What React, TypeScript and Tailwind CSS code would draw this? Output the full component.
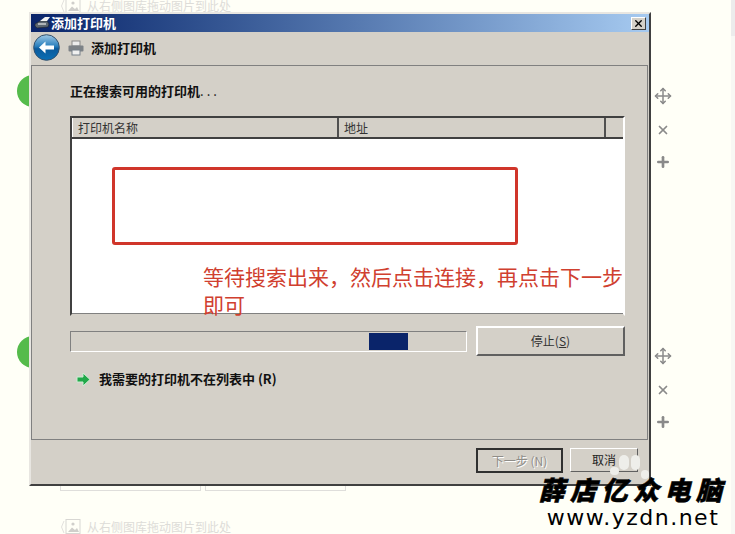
import { Move, X, Plus } from 'lucide-react';

const cjk = 'font-["Noto_Sans_CJK_SC",sans-serif]';

function DropHint({ className }: { className: string }) {
  return (
    <div className={`absolute flex items-center gap-[5px] text-[12px] leading-[12px] text-[#dddcd8] ${cjk} ${className}`}>
      <svg width="22" height="18" viewBox="0 0 22 18" fill="none">
        <path d="M4 3 L1.5 9 L4 15" stroke="#e2e1dd" />
        <rect x="6" y="1.5" width="14" height="14" stroke="#d8d7d3" />
        <circle cx="13" cy="6" r="1.6" fill="#d0cfcb" />
        <path d="M8 14 L12 9.5 L15 12 L17 10 L19 14 Z" fill="#d0cfcb" />
      </svg>
      <span>从右侧图库拖动图片到此处</span>
    </div>
  );
}

function SideTools({ className }: { className: string }) {
  return (
    <div className={`absolute flex flex-col items-center text-[#8a8a8a] ${className}`}>
      <Move size={18} strokeWidth={2} />
      <X size={14} strokeWidth={3} className="mt-[18px]" />
      <Plus size={16} strokeWidth={4} className="mt-[17px]" />
    </div>
  );
}

function BackButton() {
  return (
    <svg width="27" height="27" viewBox="0 0 27 27">
      <defs>
        <linearGradient id="back" x1="0" y1="0" x2="0" y2="1">
          <stop offset="0" stopColor="#9fc9e6" />
          <stop offset="0.45" stopColor="#2a7fbd" />
          <stop offset="0.55" stopColor="#0b5a9c" />
          <stop offset="1" stopColor="#0a6fb5" />
        </linearGradient>
      </defs>
      <circle cx="13.5" cy="13.5" r="12.8" fill="url(#back)" stroke="#33506c" />
      <path d="M6 13.5 L12.5 7.5 V11.5 H21 V15.5 H12.5 V19.5 Z" fill="#ffffff" />
    </svg>
  );
}

function PrinterIcon() {
  return (
    <svg width="16" height="16" viewBox="0 0 16 16">
      <rect x="4" y="1" width="8" height="5" fill="#ececec" stroke="#8a8a8a" />
      <rect x="0.5" y="5.5" width="15" height="6" rx="1" fill="#7d8287" />
      <rect x="4" y="10" width="8" height="5" fill="#f0f0f0" stroke="#77808a" />
    </svg>
  );
}

function TitleIcon() {
  return (
    <svg width="17" height="13" viewBox="0 0 17 13">
      <path d="M1 8 L6 5 L13 5 L15 8 L14 11 L3 12 L1 10 Z" fill="#5c6670" stroke="#20242a" strokeWidth="0.6" />
      <path d="M6 5 L11 1 L16 1 L13 5 Z" fill="#f2f2f2" />
      <path d="M4 8 H12" stroke="#e8e8e8" strokeWidth="1.2" />
    </svg>
  );
}

export default function App() {
  return (
    <div className="relative w-[735px] h-[534px] overflow-hidden bg-[#fffff7]">
      <div className="absolute left-[731px] top-0 w-[4px] h-[36px] bg-[#ececec]" />
      <div className="absolute left-[731px] top-[36px] w-[4px] h-[498px] bg-[#f8f8f4]" />

      <DropHint className="left-[60px] top-[-3px]" />
      <DropHint className="left-[60px] top-[518px]" />
      <div className="absolute left-[17px] top-[75px] w-[32px] h-[32px] rounded-full bg-[#55bb4b]" />
      <div className="absolute left-[17px] top-[336px] w-[32px] h-[32px] rounded-full bg-[#55bb4b]" />
      <div className="absolute left-[60px] top-[480px] w-[141px] h-[11px] border border-[#dfdedb]" />
      <div className="absolute left-[205px] top-[480px] w-[141px] h-[11px] border border-[#dfdedb]" />
      <SideTools className="left-[654px] top-[87px]" />
      <SideTools className="left-[654px] top-[347px]" />

      {/* dialog */}
      <div className={`absolute left-[29px] top-[12px] w-[622px] h-[474px] flex flex-col bg-[#d4d0c8] border-2 border-t-[#e8e6e1] border-l-[#e8e6e1] border-r-[#404040] border-b-[#404040] ${cjk}`}>
        <div className="h-[18px] flex items-center justify-between pl-[3px] pr-[3px] bg-gradient-to-r from-[#0a246a] to-[#a6caf0]">
          <div className="flex items-center pb-[2px] text-[13px] font-bold text-white leading-none">
            <TitleIcon />
            添加打印机
          </div>
          <div className="w-[15px] h-[13px] flex items-center justify-center bg-[#d4d0c8] border border-t-white border-l-white border-r-[#404040] border-b-[#404040]">
            <X size={11} strokeWidth={3} className="text-black" />
          </div>
        </div>

        <div className="h-[33px] flex items-start pt-[2px] pl-[2px]">
          <BackButton />
          <div className="ml-[8px] mt-[6px]">
            <PrinterIcon />
          </div>
          <span className="ml-[7px] mt-[4px] text-[13px] font-bold text-[#111]">添加打印机</span>
        </div>

        <div className="h-[375px] mr-[1px] flex flex-col border border-[#808080] pl-[37px] pr-[22px]">
          <div className="mt-[15px] ml-[1px] h-[18px] flex items-center text-[13px] font-bold text-[#111] leading-none">
            正在搜索可用的打印机<span className="tracking-[3px] font-normal">...</span>
          </div>

          <div className="relative mt-[17px] h-[200px] ml-[1px] flex flex-col bg-white border-2 border-t-[#404040] border-l-[#404040] border-r-white border-b-[#d4d0c8] shadow-[inset_0_-1px_0_#808080]">
            <div className="h-[21px] flex shrink-0 text-[12px] text-[#333] bg-[#d4d0c8] border-b-2 border-[#404040] leading-[19px]">
              <div className="w-[267px] pl-[5px] border-l border-white border-r-2 border-r-[#505050]">打印机名称</div>
              <div className="w-[267px] pl-[5px] border-r-2 border-[#505050]">地址</div>
              <div className="flex-1" />
            </div>
            <div className="absolute left-[40px] top-[49px] w-[406px] h-[78px] rounded-[3px] border-[3px] border-[#d0352a]" />
            <div className="absolute left-[131px] top-[144px] w-[430px] text-[21px] leading-[28px] text-[#d0402f]">
              等待搜索出来，然后点击连接，再点击下一步即可
            </div>
          </div>

          <div className="mt-[10px] ml-[1px] flex items-start">
            <div className="mt-[5px] w-[397px] h-[21px] border border-t-[#808080] border-l-[#808080] border-r-white border-b-white flex">
              <div className="ml-[298px] mt-[1px] w-[39px] h-[17px] bg-[#0a246a]" />
            </div>
            <div className="ml-[9px] w-[149px] h-[30px] flex items-center justify-center text-[12px] text-[#333] border-2 border-t-white border-l-white border-r-[#606060] border-b-[#606060]">
              停止(<span className="underline">S</span>)
            </div>
          </div>

          <div className="mt-[14px] ml-[7px] flex items-center gap-[8px] text-[13px] font-bold text-[#111] leading-[18px]">
            <svg width="15" height="15" viewBox="0 0 15 15">
              <path d="M1 5 H7 V1 L14 7.5 L7 14 V10 H1 Z" fill="#22a84a" stroke="#cdeed4" strokeWidth="1" />
            </svg>
            我需要的打印机不在列表中 (R)
          </div>
        </div>

        <div className="flex-1 flex items-start justify-end pt-[8px] pr-[11px] gap-[7px] text-[12px]">
          <div className="w-[87px] h-[25px] flex items-center justify-center text-[#8f8d88] border-2 border-[#303030] bg-[#d4d0c8] [text-shadow:1px_1px_0_#ffffff]">
            下一步 (N)
          </div>
          <div className="w-[68px] h-[24px] flex items-center justify-center text-[#222] border border-t-white border-l-white border-r-[#606060] border-b-[#606060]">
            取消
          </div>
        </div>
      </div>

      {/* loader dots left over the cancel button */}
      <div className="absolute left-[619px] top-[455px] w-[10px] h-[15px] rounded-full bg-[#eeeeea]" />
      <div className="absolute left-[631px] top-[455px] w-[9px] h-[15px] rounded-full bg-[#eeeeea]" />
      <div className="absolute left-[610px] top-[467px] w-[9px] h-[8px] rounded-full bg-[#eeeeea]" />
      <div className="absolute left-[641px] top-[470px] w-[8px] h-[9px] rounded-full bg-[#eeeeea]" />

      {/* watermark */}
      <div className="absolute left-[538px] top-[472px] w-[190px] flex flex-col items-center text-black">
        <div className={`text-[26px] font-black leading-[34px] tracking-[5.5px] italic whitespace-nowrap [-webkit-text-stroke:0.6px_black] ${cjk}`}>薛店亿众电脑</div>
        <div className='text-[22px] leading-[24px] tracking-[1.5px] font-["DejaVu_Sans",sans-serif] whitespace-nowrap'>www.yzdn.net</div>
      </div>
    </div>
  );
}
